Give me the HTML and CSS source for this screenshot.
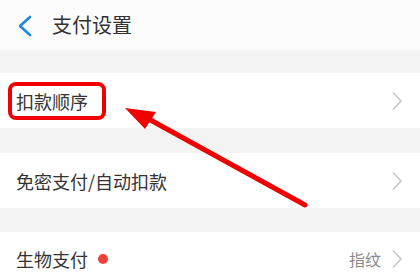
FILE: index.html
```html
<!DOCTYPE html>
<html lang="zh">
<head>
<meta charset="utf-8">
<link rel="stylesheet" href="styles.css">
</head>
<body>
<div class="page">
  <header class="topbar">
    <svg class="back" width="16" height="22" viewBox="0 0 16 22"><path d="M13 2 L3 11 L13 20" fill="none" stroke="#1e88e5" stroke-width="2.6" stroke-linecap="round" stroke-linejoin="round"/></svg>
    <h1 class="title">支付设置</h1>
  </header>
  <div class="gap"></div>
  <div class="row r1">
    <span class="label">扣款顺序</span>
    <svg class="chev" width="12" height="20" viewBox="0 0 12 20"><path d="M2 1.5 L10 10 L2 18.5" fill="none" stroke="#c8c8c8" stroke-width="1.6"/></svg>
  </div>
  <div class="gap g2"></div>
  <div class="row r2">
    <span class="label">免密支付/自动扣款</span>
    <svg class="chev" width="12" height="20" viewBox="0 0 12 20"><path d="M2 1.5 L10 10 L2 18.5" fill="none" stroke="#c8c8c8" stroke-width="1.6"/></svg>
  </div>
  <div class="gap g3"></div>
  <div class="row r3">
    <span class="label">生物支付</span>
    <span class="dot"></span>
    <span class="value">指纹</span>
    <svg class="chev" width="12" height="20" viewBox="0 0 12 20"><path d="M2 1.5 L10 10 L2 18.5" fill="none" stroke="#c8c8c8" stroke-width="1.6"/></svg>
  </div>
  <svg class="annot" width="420" height="280" viewBox="0 0 420 280">
    <rect x="10" y="84" width="94" height="34" rx="6" ry="6" fill="none" stroke="#f00000" stroke-width="4"/>
    <line x1="305" y1="205" x2="145" y2="117" stroke="#f00000" stroke-width="5" stroke-linecap="round"/>
    <polygon points="125,108 156,112 145,129" fill="#f00000"/>
  </svg>
</div>
</body>
</html>
```
FILE: styles.css
```css
html, body {
  margin: 0;
  padding: 0;
  background: #f3f3f3;
}
.page {
  position: relative;
  width: 420px;
  height: 280px;
  overflow: hidden;
  font-family: "Noto Sans CJK SC", "Noto Sans", sans-serif;
  color: #333;
}
.topbar {
  height: 50px;
  background: #fcfcfc;
  display: flex;
  align-items: center;
  padding-left: 17px;
}
.back {
  display: block;
  margin-top: 1px;
}
.title {
  margin: 0 0 0 19px;
  font-size: 20px;
  font-weight: normal;
  color: #333;
  line-height: 1;
}
.gap {
  height: 23px;
}
.g2 { height: 25px; }
.g3 { height: 24px; }
.row {
  background: #fff;
  display: flex;
  align-items: center;
  padding: 0 17px 0 16px;
}
.r1 { height: 55px; }
.r2 { height: 55px; }
.r3 { height: 48px; padding-top: 3px; }
.label {
  font-size: 18px;
  line-height: 1;
  color: #333;
}
.dot {
  width: 10px;
  height: 10px;
  border-radius: 50%;
  background: #f2413a;
  margin-left: 10px;
}
.value {
  margin-left: auto;
  margin-right: 10px;
  font-size: 16px;
  color: #8a8a8a;
  line-height: 1;
}
.chev {
  display: block;
  margin-left: auto;
}
.r3 .chev { margin-left: 0; }
.annot {
  position: absolute;
  left: 0;
  top: 0;
}
```
